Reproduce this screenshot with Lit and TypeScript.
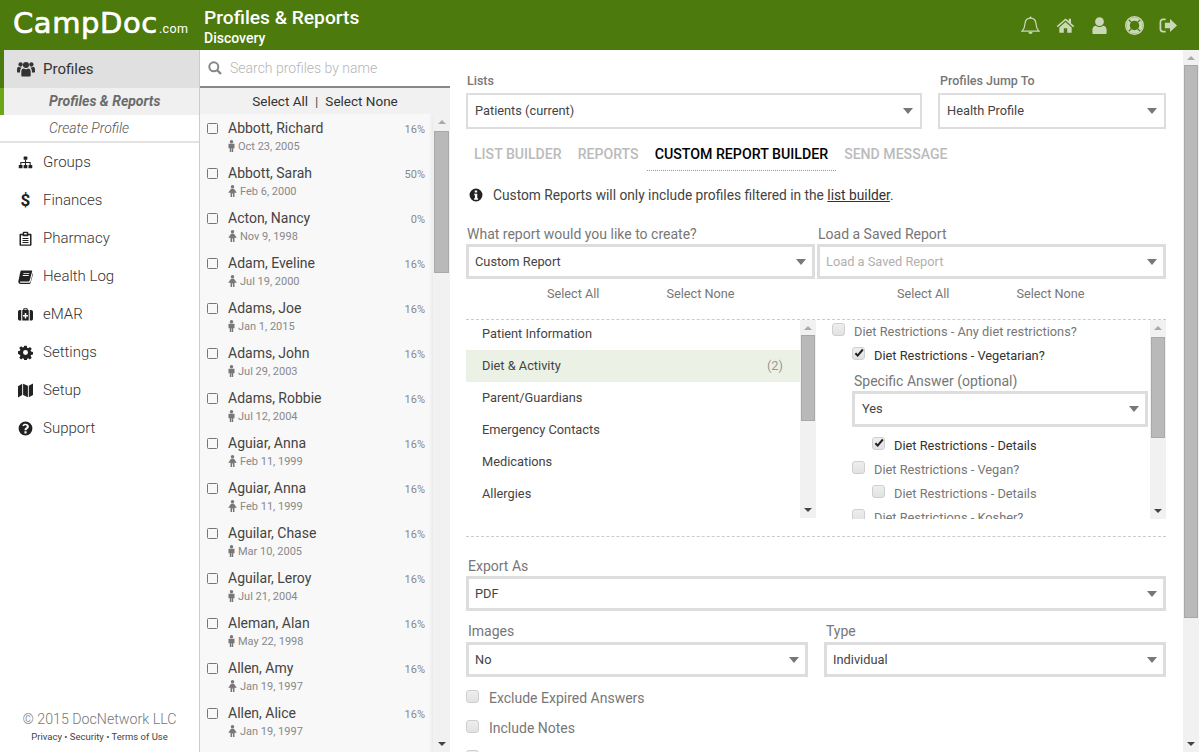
import { LitElement, html, css, svg } from "lit";
import { customElement } from "lit/decorators.js";

const ic: Record<string, any> = {
  bell: svg`<path d="M10 2.2c-3.6 0-5.6 2.6-5.8 6-.2 3.6-.9 5.6-2.9 7.6h17.4c-2-2-2.7-4-2.9-7.6-.2-3.4-2.2-6-5.8-6z" fill="none" stroke="currentColor" stroke-width="1.3"/><circle cx="10" cy="1.600" r="1.100" fill="currentColor"/><path d="M7.800 16.800h4.400a2.200 2.200 0 0 1-4.400 0z" fill="currentColor"/>`,
  home: svg`<path d="M10 2.500 0.800 10.600l1.100 1.200L10 4.700l8.100 7.100 1.100-1.200-3.400-3V3h-2.400v2.200z" fill="currentColor"/><path d="M3.500 12 10 6.300l6.500 5.700v5.500h-4.700v-4.600H8.200v4.600H3.500z" fill="currentColor"/>`,
  user: svg`<circle cx="10" cy="6" r="4.600" fill="currentColor"/><path d="M2.500 18v-3.500c0-2.600 1.800-4.300 3.800-4.300 1 .9 2.300 1.400 3.700 1.400s2.700-.5 3.700-1.400c2 0 3.800 1.700 3.800 4.300V18c0 .6-.4 1-1 1h-13c-.6 0-1-.4-1-1z" fill="currentColor"/>`,
  ring: svg`<circle cx="10" cy="10" r="6.800" fill="none" stroke="currentColor" stroke-width="3.600"/><g stroke="#4c7a0c" stroke-width="1.300"><path d="M3.600 3.600 6.900 6.900M16.400 3.600l-3.300 3.300M3.600 16.400l3.300-3.300M16.400 16.400l-3.300-3.300"/></g><circle cx="10" cy="10" r="9.300" fill="none" stroke="currentColor" stroke-width="1.400"/>`,
  out: svg`<path d="M7 3.500H4.200C2.700 3.500 1.500 4.700 1.500 6.200v7.600c0 1.500 1.200 2.700 2.700 2.700H7" fill="none" stroke="currentColor" stroke-width="1.800"/><path d="M11.600 3.200 19 10l-7.400 6.800v-3.900H6.200V7.100h5.400z" fill="currentColor"/>`,
  users: svg`<circle cx="10" cy="5.600" r="3.400"/><circle cx="4" cy="5" r="2.400"/><circle cx="16" cy="5" r="2.400"/><path d="M4.800 17.200v-4.400c0-2 1.200-3.400 2.800-3.400.7.500 1.500.8 2.400.8s1.700-.3 2.400-.8c1.600 0 2.800 1.400 2.800 3.400v4.400c0 .7-.6 1.200-1.200 1.200H6c-.6 0-1.200-.5-1.200-1.200z"/><path d="M0 11c0-2 .8-3.400 2-3.400.6.500 1.300.8 2.100.8.400 0 .8-.1 1.200-.2-.6.700-1.900 1.800-1.900 4.600v1.200H1c-.6 0-1-.4-1-1zM20 11c0-2-.8-3.400-2-3.400-.6.500-1.300.8-2.100.8-.4 0-.8-.1-1.200-.2.6.700 1.900 1.800 1.900 4.600v1.200H19c.6 0 1-.4 1-1z"/>`,
  sitemap: svg`<rect x="7.500" y="2" width="5" height="4.400" rx=".6"/><rect x="1" y="13.400" width="5" height="4.400" rx=".6"/><rect x="7.500" y="13.400" width="5" height="4.400" rx=".6"/><rect x="14" y="13.400" width="5" height="4.400" rx=".6"/><path d="M9.300 6h1.400v3.200h6.200v4.400h-1.400v-3h-4.800v3H9.300v-3H4.500v3H3.100V9.200h6.200z"/>`,
  clip: svg`<path fill-rule="evenodd" d="M3 3.500h3.200V2.800C6.200 1.800 7 1 8 1h4c1 0 1.800.8 1.800 1.800v.7H17c.6 0 1 .4 1 1v14c0 .6-.4 1-1 1H3c-.6 0-1-.4-1-1v-14c0-.6.4-1 1-1zm1 2v12.400h12V5.500h-2.200V7H6.200V5.500zM8.300 2.700v2h3.400v-2z"/><path d="M6 9.200h8v1.300H6zM6 11.900h8v1.300H6zM6 14.600h8v1.300H6z"/>`,
  book: svg`<path fill-rule="evenodd" d="M4.500 2H18.200c.6 0 .9.500.7 1.100l-3.200 12c-.3 1-1 1.700-2 1.700H3.500c-.9 0-1.100.6-1 1 .1.300.4.600 1 .6h11.800c.6 0 1.100-.4 1.300-1L19.600 5.800c.4.300.5.800.3 1.500l-3 11c-.3 1-1.200 1.700-2.200 1.700H3.200C1.500 20 .2 18.500.4 16.800L3.200 3.400C3.400 2.600 3.900 2 4.500 2zM7.300 5.200l-.3 1.200h8l.3-1.200zM6.500 8l-.3 1.200h8l.3-1.200z"/>`,
  med: svg`<path fill-rule="evenodd" d="M7 4V2.800C7 2 7.700 1.500 8.400 1.500h3.200c.7 0 1.400.5 1.400 1.300V4h1.300v14H5.700V4zm1.400 0h3.200V2.900H8.400zM9 8v2.500H6.700v2.300H9v2.500h2v-2.500h2.300v-2.300H11V8zM0 6.500C0 5.100 1 4 2.300 4h2v14h-2C1 18 0 16.900 0 15.500zM20 6.500C20 5.100 19 4 17.700 4h-2v14h2c1.300 0 2.300-1.100 2.300-2.500z"/>`,
  cog: svg`<path fill-rule="evenodd" d="M8.300 1h3.400l.5 2.600 1.500.6 2.200-1.500 2.400 2.400-1.500 2.200.6 1.500 2.600.5v3.400l-2.600.5-.6 1.500 1.500 2.200-2.400 2.400-2.200-1.500-1.500.6-.5 2.600H8.300l-.5-2.600-1.500-.6-2.200 1.500-2.400-2.400 1.500-2.200-.6-1.500L0 11.700V8.300l2.600-.5.6-1.500-1.500-2.200 2.400-2.400 2.200 1.500 1.500-.6zM10 6.700a3.300 3.300 0 1 0 0 6.600 3.300 3.300 0 0 0 0-6.600z"/>`,
  map: svg`<path d="M0 4.300 5.600 1v15L0 19.300zM6.800 1l6.400 2.500v15.500l-6.400-3zM14.400 3.500 20 .7v15.300L14.400 19z"/>`,
  question: svg`<path fill-rule="evenodd" d="M10 .8a9.200 9.200 0 1 0 0 18.400A9.200 9.200 0 0 0 10 .8zM8.600 13.800h2.800v2.800H8.600zM10 3.500c2.600 0 4.500 1.600 4.500 3.800 0 1.700-1 2.500-2 3.200-.7.500-1.100.8-1.100 1.500v.4H8.700v-.6c0-1.400.8-2.200 1.700-2.800.8-.6 1.300-1 1.300-1.800 0-.9-.8-1.500-1.800-1.500-1 0-1.800.5-2.500 1.400L5.600 5.700C6.600 4.400 8 3.500 10 3.500z"/>`,
  info: svg`<path fill-rule="evenodd" d="M10 .8a9.200 9.200 0 1 0 0 18.400A9.200 9.200 0 0 0 10 .8zM8.200 3.500h3.400v2.900H8.200zM7.500 8.200h4.300v6.500h1.200v2H7.200v-2h1.300v-4.500h-1z"/>`,
};
const icon = (n: string) => html`<svg class="ic" viewBox="0 0 20 20" fill="currentColor">${ic[n]}</svg>`;

const people = [
  ["Abbott, Richard", "Oct 23, 2005", "16%", "m"],
  ["Abbott, Sarah", "Feb 6, 2000", "50%", "f"],
  ["Acton, Nancy", "Nov 9, 1998", "0%", "f"],
  ["Adam, Eveline", "Jul 19, 2000", "16%", "f"],
  ["Adams, Joe", "Jan 1, 2015", "16%", "m"],
  ["Adams, John", "Jul 29, 2003", "16%", "m"],
  ["Adams, Robbie", "Jul 12, 2004", "16%", "m"],
  ["Aguiar, Anna", "Feb 11, 1999", "16%", "f"],
  ["Aguiar, Anna", "Feb 11, 1999", "16%", "f"],
  ["Aguilar, Chase", "Mar 10, 2005", "16%", "m"],
  ["Aguilar, Leroy", "Jul 21, 2004", "16%", "m"],
  ["Aleman, Alan", "May 22, 1998", "16%", "m"],
  ["Allen, Amy", "Jan 19, 1997", "16%", "f"],
  ["Allen, Alice", "Jan 19, 1997", "16%", "f"],
];

const nav = [
  ["sitemap", "Groups"], ["$", "Finances"], ["clip", "Pharmacy"], ["book", "Health Log"],
  ["med", "eMAR"], ["cog", "Settings"], ["map", "Setup"], ["question", "Support"],
];

const gender = (g: string) => g === "m"
  ? html`<svg class="g m" viewBox="0 0 8 14"><circle cx="4" cy="2" r="2"/><path d="M.5 4.500h7v5.200H6V14H4.300V9.700h-.6V14H2V9.700H.5z"/></svg>`
  : html`<svg class="g f" viewBox="0 0 10 14"><circle cx="5" cy="2" r="2"/><path d="M3.300 4.300h3.400L10 9H7.300v5H5.500v-4h-1v4H2.700V9H0z"/></svg>`;

const sel = (text: string, cls = "", ph = false) => html`<div class="sel ${cls}"><span class=${ph ? "ph" : ""}>${text}</span><i class="caret"></i></div>`;
const cb = (checked = false) => html`<span class="cb">${checked ? html`<svg viewBox="0 0 12 12"><path d="M2.400 6.200 4.700 8.600 9.800 2.500" fill="none" stroke="#222" stroke-width="2"/></svg>` : ""}</span>`;
const sb = (cls: string) => html`<div class="sb ${cls}"><i class="up"></i><div class="thumb"></div><div class="grow"></div><i class="down"></i></div>`;

@customElement("app-root")
export class AppRoot extends LitElement {
  static styles = css`
    :host { display: block; width: 1199px; height: 752px; overflow: hidden; font-family: Roboto, "Liberation Sans", sans-serif; color: #444; background: #fff; font-size: 14px; }
    * { box-sizing: border-box; }
    .ic { width: 18px; height: 18px; display: block; }
    header { height: 50px; background: #4c7a0c; display: flex; color: #fff; }
    .logo { width: 204px; padding: 5px 0 0 13px; font-family: "DejaVu Sans", sans-serif; font-size: 29px; line-height: 36px; letter-spacing: .6px; white-space: nowrap; -webkit-text-stroke: .7px #fff; }
    .logo small { font-size: 12.500px; letter-spacing: .4px; margin-left: 1px; font-family: Roboto, sans-serif; -webkit-text-stroke: 0; }
    .title { flex: 1; padding-top: 6px; }
    .title b { display: block; font-weight: 500; font-size: 19.200px; line-height: 24px; }
    .title span { display: block; font-weight: 500; font-size: 14px; line-height: 16px; }
    .tools { display: flex; align-items: center; gap: 15.500px; padding: 0 21px 0 0; color: #cbd8b8; }
    .tools .ic { width: 19px; height: 21px; }
    .body { display: flex; height: 702px; }
    .side { width: 200px; border-right: 1px solid #ccc; display: flex; flex-direction: column; }
    .sec { height: 38px; background: #e0e0e0; border-left: 4px solid #4c7a0c; display: flex; align-items: center; padding-left: 13px; gap: 8px; font-size: 15px; color: #333; }
    .sec .ic { width: 18px; height: 18px; }
    .sub { height: 27px; display: flex; align-items: center; padding: 0 0 0 49px; font-style: italic; font-size: 14px; font-weight: 300; color: #555; }
    .sub.on { background: #f0f0f0; border-left: 4px solid #6aa616; padding: 0 0 2px 45px; font-weight: 700; color: #6b6b6b; }
    .sub.last { height: 28px; border-bottom: 2px solid #e2e2e2; }
    .nav { display: flex; flex-direction: column; }
    .nav a { height: 38px; display: flex; align-items: center; padding-left: 18px; gap: 10px; font-size: 15px; font-weight: 300; color: #333; }
    .nav .ic, .nav .dol { width: 15px; height: 15px; color: #222; }
    .dol { font-weight: 700; font-size: 17px; line-height: 15px; text-align: center; }
    .foot { margin-top: auto; padding-bottom: 8px; text-align: center; color: #777; font-size: 14.200px; font-weight: 300; }
    .foot div { font-size: 9.500px; line-height: 15px; margin-top: 2px; color: #444; font-weight: 400; }
    .mid { width: 250px; display: flex; flex-direction: column; }
    .search { height: 38px; border-bottom: 2px solid #888; display: flex; align-items: center; padding-left: 8px; gap: 8px; color: #b5b5b5; font-size: 14px; font-weight: 300; }
    .search svg { width: 14px; height: 14px; color: #888; }
    .selbar { height: 26px; background: #f1f1f1; display: flex; justify-content: center; align-items: center; gap: 7px; font-size: 13.500px; color: #333; }
    .selbar em { font-style: normal; color: #555; }
    .listwrap { flex: 1; display: flex; background: #f8f8f8; overflow: hidden; }
    .people { flex: 1; min-width: 0; }
    .p { height: 45px; padding: 4px 8px 0 7px; display: grid; grid-template-columns: 21px 1fr auto; grid-template-rows: 20px 16px; align-items: center; }
    .p .box { width: 11px; height: 11px; border: 1.500px solid #777; border-radius: 1.500px; }
    .p .nm { font-size: 14px; color: #444; }
    .p .pc { font-size: 11px; color: #888; margin-top: 2px; }
    .p .dt { grid-column: 2 / 4; font-size: 11px; color: #888; display: flex; align-items: center; gap: 3px; }
    .g { height: 12px; fill: #777; flex: none; }
    .g.m { width: 7px; }
    .g.f { width: 9px; }
    .sb { width: 16px; flex: none; background: #f1f1f1; display: flex; flex-direction: column; align-items: center; padding: 0 1px; }
    .sb i { flex: none; width: 0; height: 0; border-left: 4px solid transparent; border-right: 4px solid transparent; }
    .sb .up { border-bottom: 4px solid #aaa; margin: 6px 0 7px; }
    .sb .down { border-top: 4px solid #444; margin: 5px 0 6px; }
    .sb .thumb { width: 100%; background: #b9b9b9; border: 1px solid #a8a8a8; }
    .grow { flex: 1; }
    .sb.s1 { width: 17px; box-shadow: -2px 0 3px rgba(0,0,0,.06); }
    .sb.s1 .thumb { height: 142px; }
    .main { flex: 1; min-width: 0; padding: 23px 17px 0 16px; overflow: hidden; }
    .row { display: flex; }
    .lbl { font-size: 12.500px; font-weight: 500; color: #777; line-height: 16px; margin-bottom: 4px; padding-left: 1px; }
    .lbl2 { font-size: 14px; font-weight: 400; color: #777; line-height: 18px; margin-bottom: 1px; padding-left: 1px; }
    .sel { height: 36px; border: 2px solid #ddd; background: #fff; display: flex; align-items: center; justify-content: space-between; padding: 0 7px 1px 7px; font-size: 12.800px; color: #444; }
    .sel.thick { height: 35px; border-width: 3px; padding: 0 6px 1px 6px; }
    .ph { color: #b0b0b0; }
    .caret { width: 0; height: 0; border-left: 5px solid transparent; border-right: 5px solid transparent; border-top: 6px solid #777; margin-top: 1px; }
    .tabs { display: flex; margin: 14px 0 0 0; height: 37px; font-size: 14.100px; font-weight: 500; color: #bbb; }
    .tabs span { padding: 3px 8px 0; height: 28px; }
    .tabs .on { color: #000; border-bottom: 1px dotted #999; font-size: 14.200px; }
    .info { display: flex; align-items: center; gap: 10px; color: #444; font-size: 13.750px; padding-left: 3px; height: 24px; margin-top: 3px; }
    .info .ic { width: 14px; height: 14px; color: #222; }
    .info u { color: #333; }
    .two { display: flex; gap: 2px; margin-top: 18px; }
    .two > div { flex: 1; }
    .links { display: flex; height: 40px; align-items: flex-start; padding-top: 7px; font-size: 12.700px; color: #777; }
    .links > div { flex: 1; display: flex; gap: 67px; padding-left: 81px; }
    .panels { border-top: 1px dashed #ccc; display: flex; height: 200px; }
    .cats { flex: none; width: 334px; }
    .cat { height: 32px; display: flex; align-items: center; justify-content: space-between; padding: 0 17px 1px 16px; font-size: 12.800px; color: #444; }
    .cat.first { height: 30px; padding-bottom: 4px; }
    .cat.on { background: #ebf1e5; }
    .cat span + span { color: #999; }
    .sb.s2 { height: 198px; }
    .sb.s2 .thumb { height: 86px; }
    .sb.s2 .up { margin-bottom: 5px; }
    .qs { flex: 1; min-width: 0; padding: 0 1px 0 16px; overflow: hidden; height: 199px; }
    .q { display: flex; align-items: center; gap: 9px; height: 24px; padding-bottom: 2px; font-size: 12.800px; color: #777; white-space: nowrap; }
    .q.on { color: #333; }
    .q.gap { margin-top: 6px; }
    .l1 { padding-left: 20px; }
    .l2 { padding-left: 40px; }
    .cb { flex: none; width: 13px; height: 13px; display: block; margin-top: -3px; border: 1px solid #cfcfcf; border-radius: 3px; background: linear-gradient(#eee, #e2e2e2); }
    .cb svg { display: block; width: 12px; height: 12px; margin-top: -1px; }
    .sa { padding: 4px 1px 1px 20px; }
    .sa .lbl2 { padding-left: 2px; margin-bottom: 1px; line-height: 18px; }
    .sa .sel { height: 36px; border-width: 3px; padding: 0 6px 1px 7px; }
    .sb.s3 { height: 199px; }
    .sb.s3 .thumb { height: 101px; }
    .sep { border-top: 1px dashed #ccc; margin-top: 17px; height: 21px; }
    .f .sel { height: 35px; border-width: 3px; padding: 0 6px 0 6px; }
    .f .lbl2 { margin-bottom: 1px; line-height: 18px; padding-left: 2px; }
    .pair { display: flex; gap: 16px; margin-top: 11px; }
    .pair > div { flex: 1; }
    .pair .lbl2 { margin-bottom: 2px; }
    .chk { display: flex; align-items: center; gap: 10px; height: 30px; font-size: 14px; color: #777; }
    .chks { margin-top: 6px; }
    .sb.s4 { height: 702px; }
    .sb.s4 .thumb { height: 553px; }
    .sb.s4 .up { margin-bottom: 5px; }
  `;
  render() {
    return html`
      <header>
        <div class="logo">CampDoc<small>.com</small></div>
        <div class="title"><b>Profiles &amp; Reports</b><span>Discovery</span></div>
        <div class="tools">${["bell", "home", "user", "ring", "out"].map(icon)}</div>
      </header>
      <div class="body">
        <aside class="side">
          <div class="sec">${icon("users")}Profiles</div>
          <div class="sub on">Profiles &amp; Reports</div>
          <div class="sub last">Create Profile</div>
          <nav class="nav">
            ${nav.map(([i, t]) => html`<a>${i === "$" ? html`<span class="dol">$</span>` : icon(i)}${t}</a>`)}
          </nav>
          <div class="foot">© 2015 DocNetwork LLC<div>Privacy • Security • Terms of Use</div></div>
        </aside>
        <section class="mid">
          <div class="search"><svg viewBox="0 0 14 14"><circle cx="5.800" cy="5.800" r="4.500" fill="none" stroke="currentColor" stroke-width="2"/><path d="M9 9l4 4" stroke="currentColor" stroke-width="2.400"/></svg>Search profiles by name</div>
          <div class="selbar"><span>Select All</span><em>|</em><span>Select None</span></div>
          <div class="listwrap">
            <div class="people">
              ${people.map(([n, d, p, g]) => html`<div class="p"><span class="box"></span><span class="nm">${n}</span><span class="pc">${p}</span><span class="dt">${gender(g)}${d}</span></div>`)}
            </div>
            ${sb("s1")}
          </div>
        </section>
        <main class="main">
          <div class="row" style="gap:16px">
            <div style="flex:1"><div class="lbl">Lists</div>${sel("Patients (current)")}</div>
            <div style="width:228px"><div class="lbl" style="padding-left:2px">Profiles Jump To</div>${sel("Health Profile")}</div>
          </div>
          <div class="tabs"><span>LIST BUILDER</span><span>REPORTS</span><span class="on">CUSTOM REPORT BUILDER</span><span>SEND MESSAGE</span></div>
          <div class="info">${icon("info")}<span>Custom Reports will only include profiles filtered in the <u>list builder</u>.</span></div>
          <div class="two">
            <div><div class="lbl2">What report would you like to create?</div>${sel("Custom Report", "thick")}</div>
            <div><div class="lbl2">Load a Saved Report</div>${sel("Load a Saved Report", "thick", true)}</div>
          </div>
          <div class="links">
            <div><span>Select All</span><span>Select None</span></div>
            <div><span>Select All</span><span>Select None</span></div>
          </div>
          <div class="panels">
            <div class="cats">
              <div class="cat first"><span>Patient Information</span></div>
              <div class="cat on"><span>Diet &amp; Activity</span><span>(2)</span></div>
              <div class="cat"><span>Parent/Guardians</span></div>
              <div class="cat"><span>Emergency Contacts</span></div>
              <div class="cat"><span>Medications</span></div>
              <div class="cat"><span>Allergies</span></div>
            </div>
            ${sb("s2")}
            <div class="qs">
              <div class="q">${cb()}Diet Restrictions - Any diet restrictions?</div>
              <div class="q on l1">${cb(true)}Diet Restrictions - Vegetarian?</div>
              <div class="sa"><div class="lbl2">Specific Answer (optional)</div>${sel("Yes")}</div>
              <div class="q on l2 gap">${cb(true)}Diet Restrictions - Details</div>
              <div class="q l1">${cb()}Diet Restrictions - Vegan?</div>
              <div class="q l2">${cb()}Diet Restrictions - Details</div>
              <div class="q l1">${cb()}Diet Restrictions - Kosher?</div>
            </div>
            ${sb("s3")}
          </div>
          <div class="sep"></div>
          <div class="f"><div class="lbl2">Export As</div>${sel("PDF")}</div>
          <div class="pair">
            <div class="f"><div class="lbl2">Images</div>${sel("No")}</div>
            <div class="f"><div class="lbl2">Type</div>${sel("Individual")}</div>
          </div>
          <div class="chks">
            <div class="chk">${cb()}Exclude Expired Answers</div>
            <div class="chk">${cb()}Include Notes</div>
            <div class="chk">${cb()}</div>
          </div>
        </main>
        ${sb("s4")}
      </div>
    `;
  }
}
